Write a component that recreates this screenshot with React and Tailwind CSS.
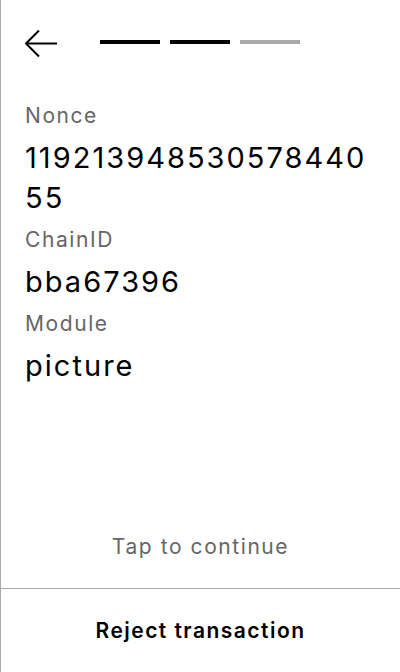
import React from "react";

const Field = ({ label, value }) => (
  <div className="mt-2 first:mt-0">
    <p className="text-[21px] leading-7 tracking-[0.075em] text-[#666666]">{label}</p>
    <p className="mt-2 text-[29px] leading-10 tracking-[0.07em] text-black break-all">{value}</p>
  </div>
);

export default function App() {
  return (
    <div
      className="h-[672px] w-[400px] flex flex-col bg-white border-l border-[#aaaaaa]"
      style={{ fontFamily: "Inter, 'Noto Sans', sans-serif" }}
    >
      <div className="flex items-start pl-6 pt-[30px] h-[58px]">
        <button className="w-8 h-7 flex items-center">
          <svg width="32" height="28" viewBox="0 0 32 28" fill="none" stroke="black" strokeWidth="2">
            <path d="M32 13.5H1" />
            <path d="M14 0.5L1 13.5L14 26.5" />
          </svg>
        </button>
        <div className="ml-[43px] mt-[10px] flex gap-[10px]">
          <span className="w-[60px] h-[4px] bg-black" />
          <span className="w-[60px] h-[4px] bg-black" />
          <span className="w-[60px] h-[4px] bg-[#aaaaaa]" />
        </div>
      </div>

      <div className="flex-1 px-6 pt-[44px]">
        <Field label="Nonce" value="11921394853057844055" />
        <Field label="ChainID" value="bba67396" />
        <Field label="Module" value="picture" />
      </div>

      <p className="text-center text-[21px] leading-7 tracking-[0.075em] text-[#666666] mb-[27px]">Tap to continue</p>

      <div className="border-t border-[#aaaaaa] h-[84px] flex items-center justify-center">
        <button className="text-[21px] font-semibold tracking-[0.07em] text-black">Reject transaction</button>
      </div>
    </div>
  );
}
